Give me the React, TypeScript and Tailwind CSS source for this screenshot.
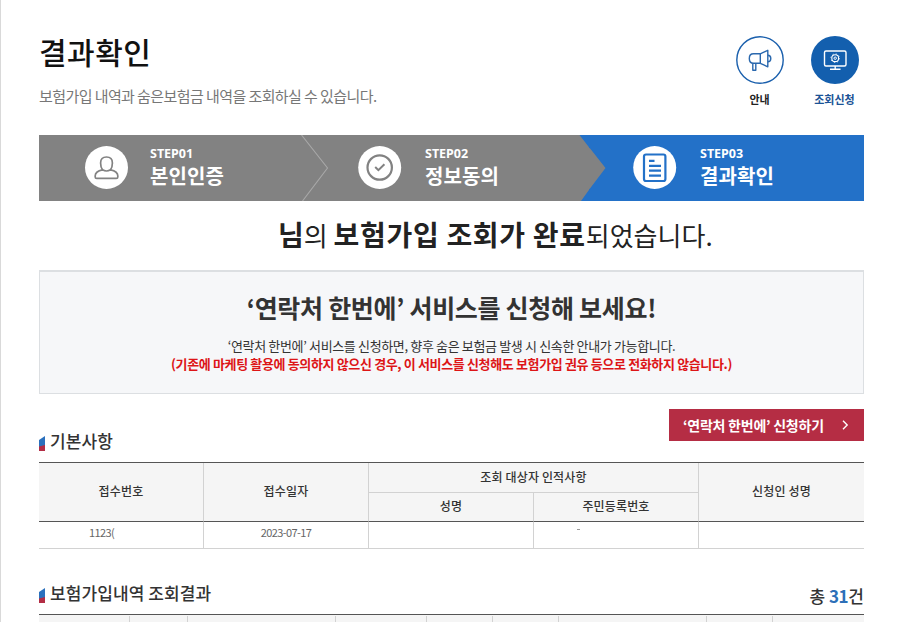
import React from "react";

function SectionMark() {
  return (
    <svg width="6" height="15" viewBox="0 0 6 15" className="shrink-0">
      <path d="M0 4L6 0V11H0Z" fill="#2a70bd" />
      <path d="M0 10.500L6 9V15H0Z" fill="#b32d45" />
    </svg>
  );
}

function StepText({ step, label }: { step: string; label: string }) {
  return (
    <div className="text-white">
      <div className="h-[18px] pt-px font-['Noto_Sans',sans-serif] text-[12.5px] leading-[18px] font-bold">{step}</div>
      <div className="h-[28px] text-[20px] leading-[28px] font-bold tracking-[0.1px] whitespace-nowrap">{label}</div>
    </div>
  );
}

function PersonIcon() {
  return (
    <svg width="44" height="44" viewBox="0 0 44 44">
      <circle cx="22.500" cy="22.500" r="21.500" fill="#fff" />
      <g fill="none" stroke="#828282" strokeWidth="1.700">
        <path d="M18.500 24.800c-1.200-1.600-1.900-4.400-1.900-6.900 0-3.700 2-5.900 5.900-5.900s5.900 2.200 5.900 5.900c0 2.500-.7 5.300-1.900 6.900" />
        <path d="M18.500 24.800c-4.500.9-7.300 2.600-7.300 6v1.100c0 .9.600 1.500 1.500 1.500h19.600c.9 0 1.500-.6 1.500-1.500v-1.100c0-3.400-2.800-5.100-7.300-6-2.500 1.500-5.500 1.500-8 0z" />
      </g>
    </svg>
  );
}

function CheckIcon() {
  return (
    <svg width="44" height="44" viewBox="0 0 44 44">
      <circle cx="21.700" cy="22.500" r="21.500" fill="#fff" />
      <circle cx="21.700" cy="22.500" r="12.200" fill="none" stroke="#828282" strokeWidth="2.200" />
      <path d="M17.200 22l3.200 3.200 6-5.900" fill="none" stroke="#828282" strokeWidth="2" />
    </svg>
  );
}

function DocumentIcon() {
  return (
    <svg width="44" height="44" viewBox="0 0 44 44">
      <circle cx="21.700" cy="22.500" r="21.500" fill="#fff" />
      <g fill="none" stroke="#2371c8" strokeWidth="2.200">
        <rect x="11" y="9.500" width="21.400" height="26.500" rx="2" />
        <path d="M16 15.800h5.500M16 20.800h12M16 25.700h12M16 30.600h12" />
      </g>
    </svg>
  );
}

function MegaphoneIcon() {
  return (
    <svg width="48" height="48" viewBox="0 0 48 48">
      <circle cx="24" cy="24" r="23.200" fill="#fff" stroke="#1b60ad" strokeWidth="1.400" />
      <g fill="none" stroke="#2a68ae" strokeWidth="1.400" strokeLinejoin="round">
        <path d="M24.300 17.800h-6.800c-2.600 0-4.200 2-4.200 4.700 0 2.800 1.600 4.800 4.200 4.800h6.800z" />
        <path d="M24.300 17.800l7.500-3.500v16.500l-7.500-3.500" />
        <path d="M31.800 19.300c2 0 3 1.300 3 3.200s-1 3.300-3 3.300" />
        <path d="M16.800 27.300v7h3v-7" />
      </g>
    </svg>
  );
}

function MonitorIcon() {
  return (
    <svg width="48" height="48" viewBox="0 0 48 48">
      <circle cx="24" cy="24" r="24" fill="#135fae" />
      <g fill="none" stroke="#fff" strokeWidth="1.400">
        <rect x="13.500" y="15" width="21.500" height="15" rx="1.500" />
        <path d="M24.200 30v3M19 33.200h10.500" />
        <circle cx="24.200" cy="22.200" r="3.400" strokeWidth="1.100" />
        <circle cx="24.200" cy="22.200" r="1.200" strokeWidth="1" />
        <circle cx="24.200" cy="22.200" r="4.300" strokeWidth="0.800" strokeDasharray="1.200 2.180" />
      </g>
    </svg>
  );
}

const headCell = "flex items-center justify-center pb-[2px] text-[12px] leading-[18px] font-medium tracking-[0.15px] text-[#333] whitespace-nowrap";
const line = "border-[#d2d2d2]";

export default function App() {
  return (
    <div className="h-[622px] w-[900px] overflow-hidden border-l border-[#d9d9d9] bg-white pr-9 pl-[38px] font-['Noto_Sans_CJK_KR','Noto_Sans',sans-serif]">
      <header className="flex h-[135px] justify-between">
        <div className="pt-[29px]">
          <h1 className="h-11 text-[30px] leading-[44px] font-medium tracking-[0.5px] text-[#111]">결과확인</h1>
          <p className="mt-[12px] h-[22px] text-[15px] leading-[22px] tracking-[-0.58px] whitespace-nowrap text-[#777]">
            보험가입 내역과 숨은보험금 내역을 조회하실 수 있습니다.
          </p>
        </div>
        <div className="flex pt-9 text-center text-[11px] leading-4 font-bold">
          <div className="flex w-[75px] flex-col items-center text-[#222]">
            <MegaphoneIcon />
            <span className="mt-[7px]">안내</span>
          </div>
          <div className="-mr-2 flex w-[75px] flex-col items-center text-[#1b5396]">
            <MonitorIcon />
            <span className="mt-[7px]">조회신청</span>
          </div>
        </div>
      </header>

      <nav className="grid h-[66px] grid-cols-3 bg-[#828282]">
        <div className="relative flex pt-[9px] pl-[45px]">
          <div className="mr-[22px] pt-[1px]"><PersonIcon /></div>
          <StepText step="STEP01" label="본인인증" />
          <svg className="absolute top-0 -right-[15px]" width="28" height="66" viewBox="0 0 28 66">
            <path d="M0.500 0L26.500 33L1.500 66" fill="none" stroke="#a8a8a8" strokeWidth="1.100" />
          </svg>
        </div>
        <div className="flex pt-[9px] pl-[44px]">
          <div className="mr-[23px] pt-[1px]"><CheckIcon /></div>
          <StepText step="STEP02" label="정보동의" />
        </div>
        <div className="relative flex bg-[#2371c8] pt-[9px] pl-[44px]">
          <svg className="absolute top-0 -left-[10px]" width="27" height="66" viewBox="0 0 27 66">
            <path d="M0 0H10V66H0Z" fill="#828282" />
            <path d="M0.500 0L26.500 33L1.500 66H10V0Z" fill="#828282" />
            <path d="M0.500 0H11V13.500ZM2 66L11 53.500V66Z" fill="#2371c8" />
          </svg>
          <div className="mr-[23px] pt-[1px]"><DocumentIcon /></div>
          <StepText step="STEP03" label="결과확인" />
        </div>
      </nav>

      <h2 className="h-[69px] pt-[12px] pl-[239px] text-[26px] leading-[42px] font-normal whitespace-nowrap text-[#222]">
        <b className="text-[28px] font-bold">님</b>의 <b className="text-[28px] font-bold tracking-[0.7px]">보험가입 조회가 완료</b>되었습니다.
      </h2>

      <section className="h-[124px] border border-t-2 border-[#dcdfe2] bg-[#f6f7f9] pt-[16px] text-center whitespace-nowrap">
        <h3 className="h-[38px] text-[25px] leading-[38px] font-bold tracking-[-0.3px] text-[#333]">
          ‘연락처 한번에’ 서비스를 신청해 보세요!
        </h3>
        <p className="mt-[11px] h-[18px] text-[13px] leading-[18px] tracking-[-0.35px] text-[#333]">
          ‘연락처 한번에’ 서비스를 신청하면, 향후 숨은 보험금 발생 시 신속한 안내가 가능합니다.
        </p>
        <p className="h-[18px] text-[13px] leading-[18px] font-bold tracking-[-0.36px] text-[#dd1517]">
          (기존에 마케팅 활용에 동의하지 않으신 경우, 이 서비스를 신청해도 보험가입 권유 등으로 전화하지 않습니다.)
        </p>
      </section>

      <div className="flex h-[68px] justify-between">
        <div className="mt-[33px] flex h-[28px] gap-[5px]">
          <div className="pt-[9px]"><SectionMark /></div>
          <h4 className="pt-[2px] text-[17px] leading-[24px] font-medium tracking-[0.1px] whitespace-nowrap text-[#333]">기본사항</h4>
        </div>
        <button className="mt-[15px] flex h-8 w-[195px] items-center justify-between bg-[#b52d44] pr-[15px] pb-px pl-[14px] text-[14px] leading-5 font-bold tracking-[-0.25px] whitespace-nowrap text-white">
          ‘연락처 한번에’ 신청하기
          <svg className="mt-px" width="7" height="10" viewBox="0 0 7 10">
            <path d="M1 0.800L5.200 5L1 9.200" fill="none" stroke="#fff" strokeWidth="1.400" />
          </svg>
        </button>
      </div>

      <div className="grid h-[87px] grid-cols-[165px_165px_165px_165px_165px] grid-rows-[30px_29px_26px] border-t border-b border-t-[#555] border-b-[#d2d2d2]">
        <div className={`${headCell} ${line} row-span-2 border-r border-b border-b-[#555] bg-[#f5f5f5]`}>접수번호</div>
        <div className={`${headCell} ${line} row-span-2 border-r border-b border-b-[#555] bg-[#f5f5f5]`}>접수일자</div>
        <div className={`${headCell} ${line} col-span-2 border-r border-b bg-[#f5f5f5]`}>조회 대상자 인적사항</div>
        <div className={`${headCell} row-span-2 border-b border-b-[#555] bg-[#f5f5f5]`}>신청인 성명</div>
        <div className={`${headCell} ${line} border-r border-b border-b-[#555] bg-[#f5f5f5]`}>성명</div>
        <div className={`${headCell} ${line} border-r border-b border-b-[#555] bg-[#f5f5f5]`}>주민등록번호</div>
        <div className={`${line} border-r pt-px pl-[50px] text-[11px] leading-[18px] tracking-[-0.6px] text-[#666]`}>1123(</div>
        <div className={`${line} border-r pt-px text-center text-[11px] leading-[18px] tracking-[-0.6px] text-[#666]`}>2023-07-17</div>
        <div className={`${line} border-r`} />
        <div className={`${line} border-r pt-[7px] pl-[43px]`}>
          <div className="h-px w-[3px] bg-[#999]" />
        </div>
        <div />
      </div>

      <div className="flex h-[65px] justify-between">
        <div className="mt-[30px] flex h-[28px] gap-[5px]">
          <div className="pt-[9px]"><SectionMark /></div>
          <h4 className="pt-[2px] text-[17px] leading-[24px] font-medium tracking-[0.1px] whitespace-nowrap text-[#333]">보험가입내역 조회결과</h4>
        </div>
        <p className="pt-[34px] text-[17px] leading-[26px] font-medium whitespace-nowrap text-[#333]">
          총 <b className="font-bold tracking-[-0.3px] text-[#2c70b8]">31</b>건
        </p>
      </div>
      <div className="grid h-[8px] grid-cols-[91px_58px_148px_91px_66px_66px_148px_66px_91px] border-t border-[#555] bg-[#f5f5f5] pt-px">
        {Array.from({ length: 8 }, (_, i) => (
          <div key={i} className="border-r border-[#d2d2d2]" />
        ))}
        <div />
      </div>
    </div>
  );
}
